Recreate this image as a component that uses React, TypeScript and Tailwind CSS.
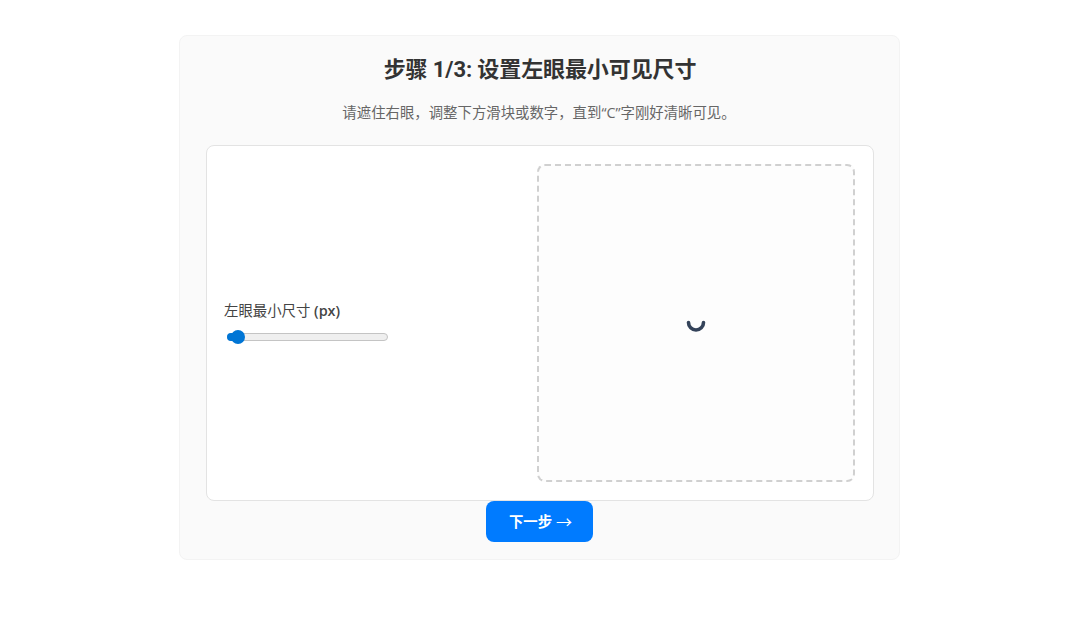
export default function App() {
  return (
    <div className="min-h-[630px] bg-white pt-[35px] font-['Open_Sans','Noto_Sans_CJK_SC',sans-serif]">
      <div className="ml-[179px] flex h-[525px] w-[721px] flex-col items-center rounded-lg border border-[#f3f3f3] bg-[#fafafa] pt-[18px] pr-[25px] pl-[26px]">
        <h1 className="font-['Roboto','Noto_Sans_CJK_SC',sans-serif] text-[22px] leading-[32px] font-bold tracking-[-0.1px] text-[#333333]">步骤 1/3: 设置左眼最小可见尺寸</h1>
        <p className="mt-[15px] -ml-[2px] text-[14.4px] leading-[24px] text-[#666666]">请遮住右眼，调整下方滑块或数字，直到“C”字刚好清晰可见。</p>

        <div className="mt-[20px] flex h-[356px] w-full items-center justify-between rounded-lg border border-[#e3e3e3] bg-white pr-[18px] pl-[17px]">
          {/* Slider column */}
          <div className="-mt-[4px] w-[165px]">
            <label className="block text-[14.4px] leading-[20px] text-[#444444]">
              左眼最小尺寸 <span className="font-semibold">(px)</span>
            </label>
            <div className="relative mt-[12px] ml-[3px] h-[8px] w-[161px] rounded-full border border-[#c4c4c4] bg-[#efefef]">
              <div className="absolute -top-px -left-px h-[8px] w-[10px] rounded-l-full bg-[#0075d5]" />
              <div className="absolute top-[-4px] left-[3px] h-[14px] w-[14px] rounded-full bg-[#0075d5]" />
            </div>
          </div>

          {/* Preview box */}
          <div className="flex h-[318px] w-[318px] items-center justify-center rounded-lg border-2 border-dashed border-[#d0d0d0] bg-[#fdfdfd]">
            <svg width="20" height="20" viewBox="0 0 20 20" fill="none">
              <path d="M2.5 9.5a7.5 7.5 0 0 0 15 0" stroke="#34435a" strokeWidth="3.6" strokeLinecap="round" />
            </svg>
          </div>
        </div>

        <button className="-ml-px flex h-[41px] w-[107px] items-center justify-center gap-[4px] rounded-lg bg-[#007bff] pl-[2px] text-[14.4px] font-bold text-white">
          下一步<span className="text-[16px] font-normal">→</span>
        </button>
      </div>
    </div>
  );
}
